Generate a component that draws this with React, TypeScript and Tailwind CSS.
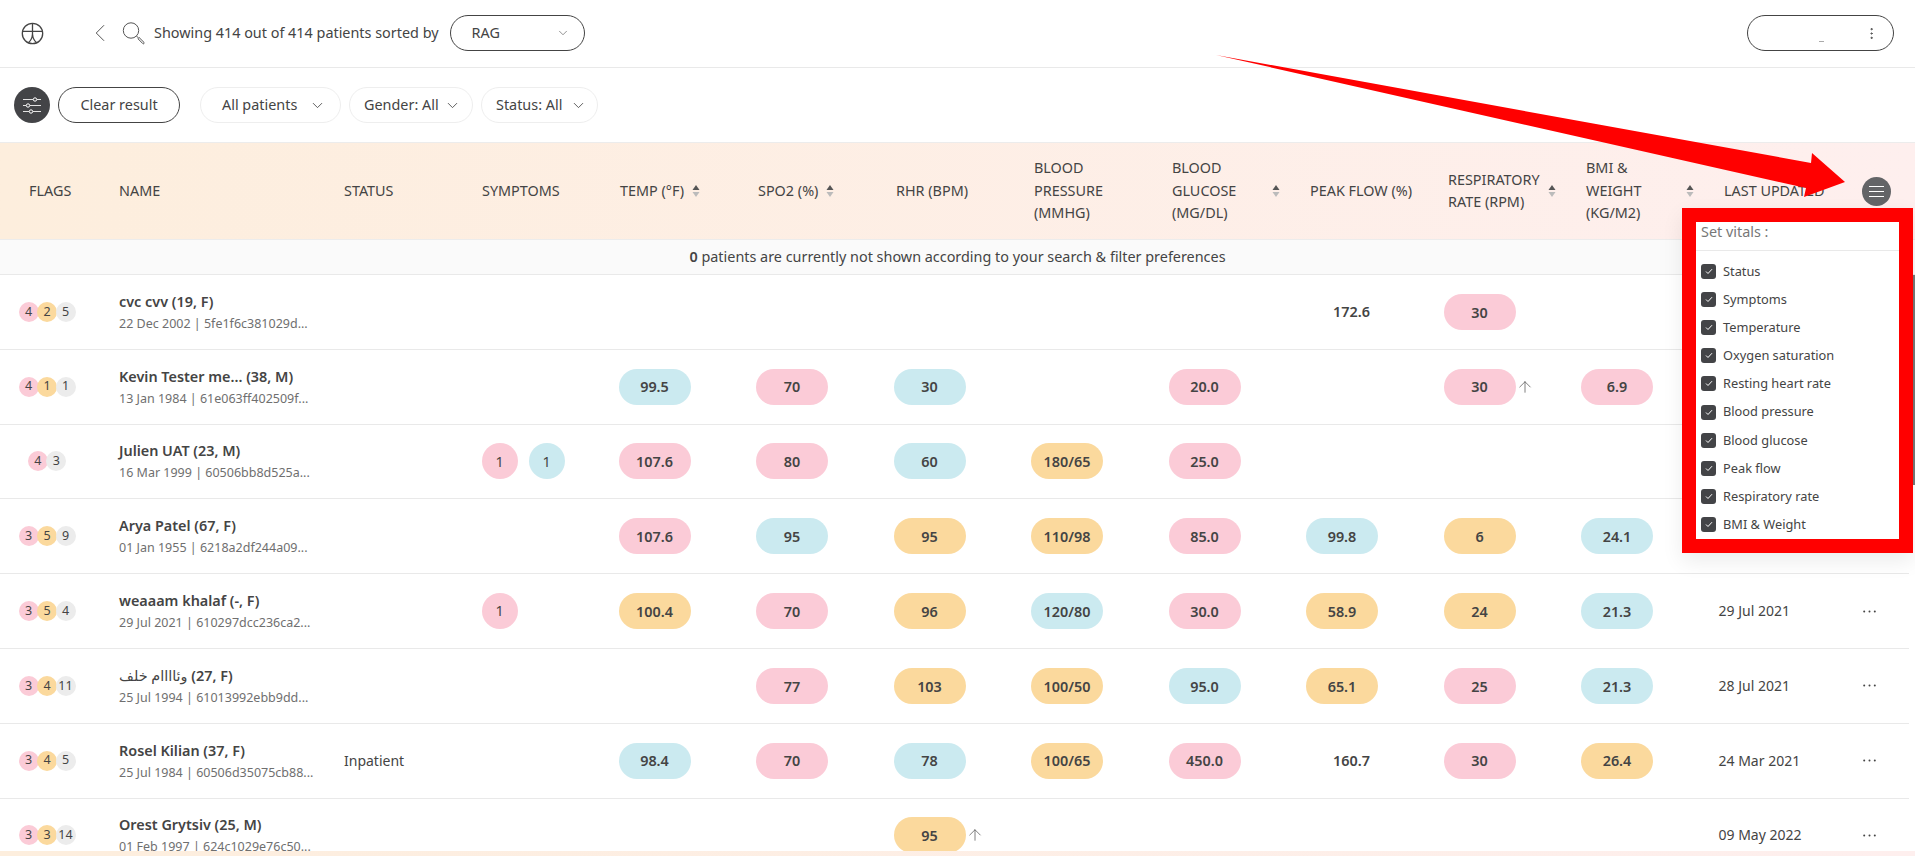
import React from 'react';
import { ArrowUp, ChevronDown, ChevronLeft, EllipsisVertical } from 'lucide-react';

type Tone = 'p' | 'o' | 'b' | 'plain';
type Vital = { v: string; t: Tone; up?: boolean } | null;

type Patient = {
  name: React.ReactNode;
  sub: string;
  flags: { v: number; t: 'p' | 'o' | 'g' }[];
  status?: string;
  symptoms?: { v: number; t: 'p' | 'b' }[];
  vitals: Vital[];
  updated?: string;
};

const ROW_COLS = 'grid grid-cols-[119px_225px_137.5px_137px_repeat(8,137.5px)_144.5px_1fr] items-center';
const HEAD_COLS = 'grid grid-cols-[119px_225px_repeat(11,138px)_140px_1fr] items-center';

const toneClass: Record<string, string> = {
  p: 'bg-[#fbcbd7]',
  o: 'bg-[#fbd99d]',
  b: 'bg-[#cbeaf0]',
  g: 'bg-[#ececec]',
};

const f = (a: number, b: number, c: number) => [
  { v: a, t: 'p' as const },
  { v: b, t: 'o' as const },
  { v: c, t: 'g' as const },
];

const patients: Patient[] = [
  {
    name: 'cvc cvv (19, F)',
    sub: '22 Dec 2002 | 5fe1f6c381029d...',
    flags: f(4, 2, 5),
    vitals: [null, null, null, null, null, { v: '172.6', t: 'plain' }, { v: '30', t: 'p' }, null],
  },
  {
    name: 'Kevin Tester me... (38, M)',
    sub: '13 Jan 1984 | 61e063ff402509f...',
    flags: f(4, 1, 1),
    vitals: [
      { v: '99.5', t: 'b' },
      { v: '70', t: 'p' },
      { v: '30', t: 'b' },
      null,
      { v: '20.0', t: 'p' },
      null,
      { v: '30', t: 'p', up: true },
      { v: '6.9', t: 'p' },
    ],
  },
  {
    name: 'Julien UAT (23, M)',
    sub: '16 Mar 1999 | 60506bb8d525a...',
    flags: [
      { v: 4, t: 'p' },
      { v: 3, t: 'g' },
    ],
    symptoms: [
      { v: 1, t: 'p' },
      { v: 1, t: 'b' },
    ],
    vitals: [
      { v: '107.6', t: 'p' },
      { v: '80', t: 'p' },
      { v: '60', t: 'b' },
      { v: '180/65', t: 'o' },
      { v: '25.0', t: 'p' },
      null,
      null,
      null,
    ],
  },
  {
    name: 'Arya Patel (67, F)',
    sub: '01 Jan 1955 | 6218a2df244a09...',
    flags: f(3, 5, 9),
    vitals: [
      { v: '107.6', t: 'p' },
      { v: '95', t: 'b' },
      { v: '95', t: 'o' },
      { v: '110/98', t: 'o' },
      { v: '85.0', t: 'p' },
      { v: '99.8', t: 'b' },
      { v: '6', t: 'o' },
      { v: '24.1', t: 'b' },
    ],
  },
  {
    name: 'weaaam khalaf (-, F)',
    sub: '29 Jul 2021 | 610297dcc236ca2...',
    flags: f(3, 5, 4),
    symptoms: [{ v: 1, t: 'p' }],
    vitals: [
      { v: '100.4', t: 'o' },
      { v: '70', t: 'p' },
      { v: '96', t: 'o' },
      { v: '120/80', t: 'b' },
      { v: '30.0', t: 'p' },
      { v: '58.9', t: 'o' },
      { v: '24', t: 'o' },
      { v: '21.3', t: 'b' },
    ],
    updated: '29 Jul 2021',
  },
  {
    name: (
      <>
        <span className="font-normal">وئاااام خلف</span> (27, F)
      </>
    ),
    sub: '25 Jul 1994 | 61013992ebb9dd...',
    flags: f(3, 4, 11),
    vitals: [
      null,
      { v: '77', t: 'p' },
      { v: '103', t: 'o' },
      { v: '100/50', t: 'o' },
      { v: '95.0', t: 'b' },
      { v: '65.1', t: 'o' },
      { v: '25', t: 'p' },
      { v: '21.3', t: 'b' },
    ],
    updated: '28 Jul 2021',
  },
  {
    name: 'Rosel Kilian (37, F)',
    sub: '25 Jul 1984 | 60506d35075cb88...',
    flags: f(3, 4, 5),
    status: 'Inpatient',
    vitals: [
      { v: '98.4', t: 'b' },
      { v: '70', t: 'p' },
      { v: '78', t: 'b' },
      { v: '100/65', t: 'o' },
      { v: '450.0', t: 'p' },
      { v: '160.7', t: 'plain' },
      { v: '30', t: 'p' },
      { v: '26.4', t: 'o' },
    ],
    updated: '24 Mar 2021',
  },
  {
    name: 'Orest Grytsiv (25, M)',
    sub: '01 Feb 1997 | 624c1029e76c50...',
    flags: f(3, 3, 14),
    vitals: [null, null, { v: '95', t: 'o', up: true }, null, null, null, null, null],
    updated: '09 May 2022',
  },
];

const headers: { lines: string[]; sort?: 'tight' | 'wide' }[] = [
  { lines: ['TEMP (°F)'], sort: 'tight' },
  { lines: ['SPO2 (%)'], sort: 'tight' },
  { lines: ['RHR (BPM)'] },
  { lines: ['BLOOD', 'PRESSURE', '(MMHG)'] },
  { lines: ['BLOOD', 'GLUCOSE', '(MG/DL)'], sort: 'wide' },
  { lines: ['PEAK FLOW (%)'] },
  { lines: ['RESPIRATORY', 'RATE (RPM)'], sort: 'wide' },
  { lines: ['BMI &', 'WEIGHT', '(KG/M2)'], sort: 'wide' },
];

const vitalOptions = [
  'Status',
  'Symptoms',
  'Temperature',
  'Oxygen saturation',
  'Resting heart rate',
  'Blood pressure',
  'Blood glucose',
  'Peak flow',
  'Respiratory rate',
  'BMI & Weight',
];

const LogoIcon = () => (
  <svg width="23" height="23" viewBox="0 0 23 23" fill="none" stroke="#444" strokeWidth="1.3">
    <circle cx="11.5" cy="11.5" r="10.2" />
    <path d="M2 9.3H21M11.5 1.5V12M11.5 12C11.3 15.5 9.5 19 7.3 20.8M11.5 12C11.7 15.5 13.5 19 15.7 20.8" />
  </svg>
);

const SearchIcon = () => (
  <svg width="23" height="23" viewBox="0 0 23 23" fill="none" stroke="#555" strokeWidth="1">
    <circle cx="9" cy="8.5" r="7.7" />
    <path d="M14.5 14L16.5 16" />
    <path d="M16 16.8L17.2 15.6L22 20.4A0.85 0.85 0 0 1 20.8 21.6Z" />
  </svg>
);

const SlidersIcon = () => (
  <svg width="20" height="17" viewBox="0 0 20 17" fill="none" stroke="#fff" strokeWidth="1">
    <path d="M1 2.5H11M15 2.5H19M1 8.5H4M8 8.5H19M1 14.5H7M11 14.5H19" strokeOpacity="0.85" />
    <circle cx="13" cy="2.5" r="1.7" />
    <circle cx="6" cy="8.5" r="1.7" />
    <circle cx="9" cy="14.5" r="1.7" />
  </svg>
);

const SortIcon = () => (
  <svg width="8" height="14" viewBox="0 0 8 14" className="shrink-0">
    <path d="M4 1L7.5 6H0.5Z" fill="#555" />
    <path d="M4 13L7.5 8H0.5Z" fill="#bbb" />
  </svg>
);

const Dots = () => (
  <svg width="13" height="3" viewBox="0 0 13 3" fill="#444">
    <circle cx="1.2" cy="1.5" r="1" />
    <circle cx="6.5" cy="1.5" r="1" />
    <circle cx="11.8" cy="1.5" r="1" />
  </svg>
);

const FilterPill = ({ label, className }: { label: string; className: string }) => (
  <button className={`flex h-9 items-center justify-between rounded-full border border-[#eeeeee] text-[14.4px] text-[#444] ${className}`}>
    <span>{label}</span>
    <ChevronDown size={17} strokeWidth={1.2} />
  </button>
);

const VitalCell = ({ vital }: { vital: Vital }) => {
  if (!vital) return <div />;
  if (vital.t === 'plain') {
    return <div className="pl-[27px] text-[14.4px] font-semibold text-[#444]">{vital.v}</div>;
  }
  return (
    <div className="flex items-center">
      <div className={`flex h-9 w-[72px] items-center justify-center rounded-full pt-[1px] text-[14.4px] font-semibold text-[#444] ${toneClass[vital.t]}`}>
        {vital.v}
      </div>
      {vital.up && <ArrowUp size={18} strokeWidth={1} className="text-[#555]" />}
    </div>
  );
};

const PatientRow = ({ p }: { p: Patient }) => (
  <div className={`${ROW_COLS} h-[74.8px] shrink-0 border-b border-[#e9e9e9]`}>
    <div className="flex justify-center pr-[25px]">
      {p.flags.map((fl, i) => (
        <div
          key={i}
          className={`flex h-5 w-5 items-center justify-center rounded-full text-[12.5px] text-[#444] [&:not(:first-child)]:-ml-[1.5px] ${toneClass[fl.t]}`}
        >
          {fl.v}
        </div>
      ))}
    </div>
    <div className="pt-[2px] text-[#444]">
      <div className="text-[14.4px] leading-[22px] font-semibold">{p.name}</div>
      <div className="text-[12.5px] leading-[22px] text-[#6f6f6f]">{p.sub}</div>
    </div>
    <div className="text-sm text-[#444]">{p.status}</div>
    <div className="flex gap-[11px]">
      {p.symptoms?.map((s, i) => (
        <div key={i} className={`flex h-9 w-9 items-center justify-center rounded-full text-[14.4px] text-[#444] ${toneClass[s.t]}`}>
          {s.v}
        </div>
      ))}
    </div>
    {p.vitals.map((v, i) => (
      <VitalCell key={i} vital={v} />
    ))}
    <div className="text-sm text-[#444]">{p.updated}</div>
    <div className="flex items-center">
      <Dots />
    </div>
  </div>
);

const App = () => {
  return (
    <div className="relative flex h-[856px] w-[1915px] flex-col overflow-hidden bg-white font-['Noto_Sans','DejaVu_Sans',sans-serif] text-[#444]">
      {/* Top bar */}
      <header className="flex h-[68px] shrink-0 items-center border-b border-[#e9e9e9] pr-[21px] pb-[1px] pl-[21px]">
        <LogoIcon />
        <ChevronLeft size={30} strokeWidth={0.8} className="ml-[41px] text-[#555]" />
        <div className="ml-[7px]">
          <SearchIcon />
        </div>
        <span className="ml-[9px] text-[14.4px]">Showing 414 out of 414 patients sorted by</span>
        <button className="ml-[11px] flex h-9 w-[135px] items-center justify-between rounded-full border border-[#444] pr-[14px] pl-[21px] text-[14.4px]">
          RAG
          <ChevronDown size={14} strokeWidth={1} />
        </button>
        <button className="relative ml-auto flex h-9 w-[147px] items-center justify-end rounded-full border border-[#444] pr-[14px]">
          <span className="absolute top-[25px] left-[71px] h-px w-[5px] bg-[#aaa]" />
          <EllipsisVertical size={15} strokeWidth={1.5} />
        </button>
      </header>

      {/* Filters */}
      <div className="flex h-[74px] shrink-0 items-center pl-[14px]">
        <button className="flex h-9 w-9 items-center justify-center rounded-full bg-[#434447]">
          <SlidersIcon />
        </button>
        <button className="ml-2 h-9 w-[122px] rounded-full border border-[#444] text-[14.4px]">Clear result</button>
        <FilterPill label="All patients" className="ml-5 w-[141px] pr-[14px] pl-[21px]" />
        <FilterPill label="Gender: All" className="ml-2 w-[124px] pr-[11px] pl-[14px]" />
        <FilterPill label="Status: All" className="ml-2 w-[117px] pr-[10px] pl-[14px]" />
      </div>

      {/* Table head */}
      <div className={`${HEAD_COLS} h-[98px] shrink-0 border-y border-[#ececec] bg-gradient-to-r from-[#fdeedd] to-[#feefee] text-[14.4px] leading-[22.5px]`}>
        <div className="pl-[29px]">FLAGS</div>
        <div>NAME</div>
        <div>STATUS</div>
        <div>SYMPTOMS</div>
        {headers.map((h, i) => (
          <div key={i} className={`flex items-center ${h.sort === 'tight' ? 'gap-2' : ''}`}>
            <div className={h.sort === 'wide' ? 'w-[100px]' : ''}>
              {h.lines.map((line) => (
                <div key={line}>{line}</div>
              ))}
            </div>
            {h.sort && <SortIcon />}
          </div>
        ))}
        <div>LAST UPDATED</div>
        <div className="flex items-center">
          <button className="flex h-[29px] w-[29px] items-center justify-center rounded-full bg-[#636467]">
            <svg width="15" height="11" viewBox="0 0 15 11" stroke="#fff" strokeWidth="1">
              <path d="M0 .5H15M0 5.5H15M0 10.5H15" />
            </svg>
          </button>
        </div>
      </div>

      {/* Hidden patients note */}
      <div className="flex h-[35px] shrink-0 items-center justify-center border-b border-[#e9e9e9] bg-[#fafafa] text-[14.4px]">
        <span>
          <b className="font-semibold">0</b> patients are currently not shown according to your search &amp; filter preferences
        </span>
      </div>

      {/* Rows and scrollbar */}
      <div className="flex min-h-0 flex-1">
        <div className="flex w-[1909px] flex-col overflow-hidden">
          {patients.map((p, i) => (
            <PatientRow key={i} p={p} />
          ))}
        </div>
        <div className="flex flex-1 justify-end">
          <div className="h-[210px] w-[2px] bg-[#777]" />
        </div>
      </div>

      {/* Page foot */}
      <div className="h-[5px] shrink-0 bg-gradient-to-r from-[#fdeedd] to-[#feefee]" />

      {/* Set vitals dropdown, framed in red */}
      <div className="absolute top-[208px] left-[1682px] h-[345px] w-[231px] border-[14.5px] border-[#ff0000] bg-white shadow-[0_8px_20px_rgba(0,0,0,0.08)]">
        <div className="h-[29px] border-b border-[#e9e9e9] pl-[5px] text-[14.4px] leading-[20px] text-[#777]">Set vitals :</div>
        <div className="pt-[6px] pl-[5px]">
          {vitalOptions.map((o) => (
            <div key={o} className="flex h-[28.2px] items-center gap-[7px] text-[12.8px]">
              <span className="flex h-[15px] w-[15px] items-center justify-center rounded-[3px] bg-[#434447]">
                <svg width="8" height="7" viewBox="0 0 8 7" fill="none" stroke="#fff" strokeWidth="1">
                  <path d="M1 3.5L3 5.5L7 1.2" />
                </svg>
              </span>
              {o}
            </div>
          ))}
        </div>
      </div>

      {/* Red annotation arrow */}
      <svg className="pointer-events-none absolute inset-0" width="1915" height="856" fill="#ff0000">
        <polygon points="1216,55 1811,163 1812,153 1845,182 1804,197 1806,188" />
      </svg>
    </div>
  );
};

export default App;
